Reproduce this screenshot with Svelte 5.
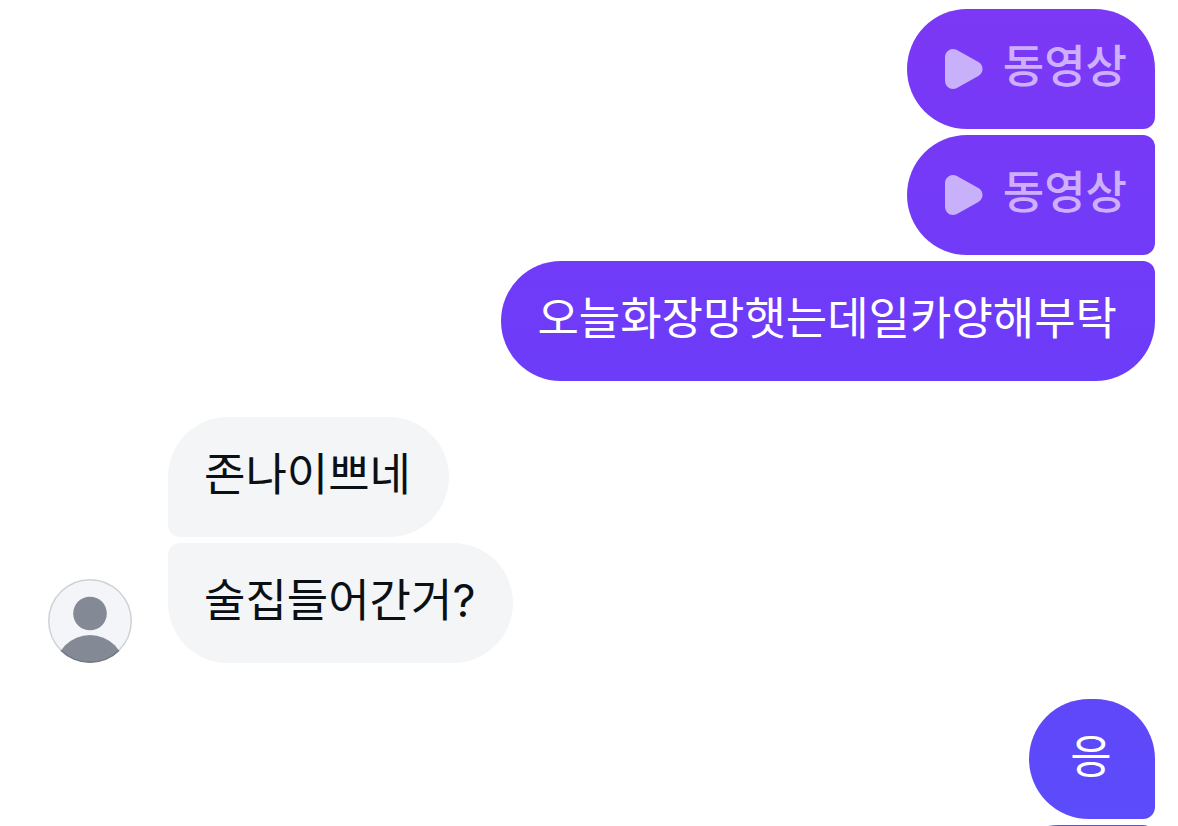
<script>
  const videos = [1, 2];
</script>

<main class="chat">
  <section class="group sent">
    {#each videos as id (id)}
      <button class="bubble video" class:first={id === 1} type="button">
        <svg class="play" viewBox="0 0 40 44" aria-hidden="true">
          <path d="M10 10V34L31.500 22Z" />
        </svg>
        <span>동영상</span>
      </button>
    {/each}
    <p class="bubble last">오늘화장망햇는데일카양해부탁</p>
  </section>

  <section class="group received">
    <svg class="avatar" viewBox="0 0 84 84" aria-hidden="true">
      <defs><clipPath id="face"><circle cx="42" cy="42" r="42" /></clipPath></defs>
      <g clip-path="url(#face)">
        <circle cx="42" cy="42" r="42" fill="#f3f5f8" />
        <circle cx="42" cy="34.500" r="16.800" fill="#838a96" />
        <circle cx="42" cy="91" r="35" fill="#838a96" />
      </g>
      <circle cx="42" cy="42" r="41.250" fill="none" stroke="#000" stroke-opacity=".15" stroke-width="1.500" />
    </svg>
    <div class="stack">
      <p class="bubble first">존나이쁘네</p>
      <p class="bubble last">술집들어간거?</p>
    </div>
  </section>

  <section class="group sent">
    <p class="bubble first">응</p>
    <p class="bubble peek"></p>
  </section>
</main>

<style>
  :global(body) {
    margin: 0;
    background: #fff;
  }
  .chat {
    display: flex;
    flex-direction: column;
    gap: 36px;
    box-sizing: border-box;
    height: 100vh;
    overflow: hidden;
    padding: 9px 23px 0 48px;
    font-family: Inter, "Noto Sans CJK KR", sans-serif;
    font-size: 45px;
    line-height: 60px;
  }
  .group {
    display: flex;
    flex-shrink: 0;
  }
  .sent, .stack {
    display: flex;
    flex-direction: column;
    gap: 6px;
  }
  .sent {
    align-items: flex-end;
  }
  .received {
    align-items: flex-end;
    gap: 36px;
  }
  .stack {
    align-items: flex-start;
  }
  .bubble {
    box-sizing: border-box;
    min-width: 126px;
    min-height: 120px;
    margin: 0;
    padding: 28px 38px 32px 36px;
    white-space: nowrap;
  }
  .sent .bubble {
    color: #fff;
    text-align: center;
    background: linear-gradient(#7c38f5, #6c3cf9 45%, #5b4cfa) fixed;
    border: 0;
    border-radius: 60px 12px 12px 60px;
  }
  .sent .first {
    border-top-right-radius: 60px;
  }
  .sent .last {
    border-bottom-right-radius: 60px;
  }
  .received .bubble {
    color: #0b1014;
    background: #f3f5f7;
    border-radius: 12px 60px 60px 12px;
  }
  .received .first {
    border-top-left-radius: 60px;
  }
  .received .last {
    border-bottom-left-radius: 60px;
  }
  .sent .video {
    display: flex;
    align-items: center;
    gap: 20px;
    padding-right: 28px;
    font: inherit;
    font-weight: 500;
    color: #cdaffb;
  }
  .play {
    width: 40px;
    height: 44px;
    margin-top: 4px;
    fill: #c9b0fb;
    stroke: #c9b0fb;
    stroke-width: 16px;
    stroke-linejoin: round;
  }
  .avatar {
    width: 84px;
    height: 84px;
  }
  .sent .peek {
    min-width: 156px;
  }
</style>
